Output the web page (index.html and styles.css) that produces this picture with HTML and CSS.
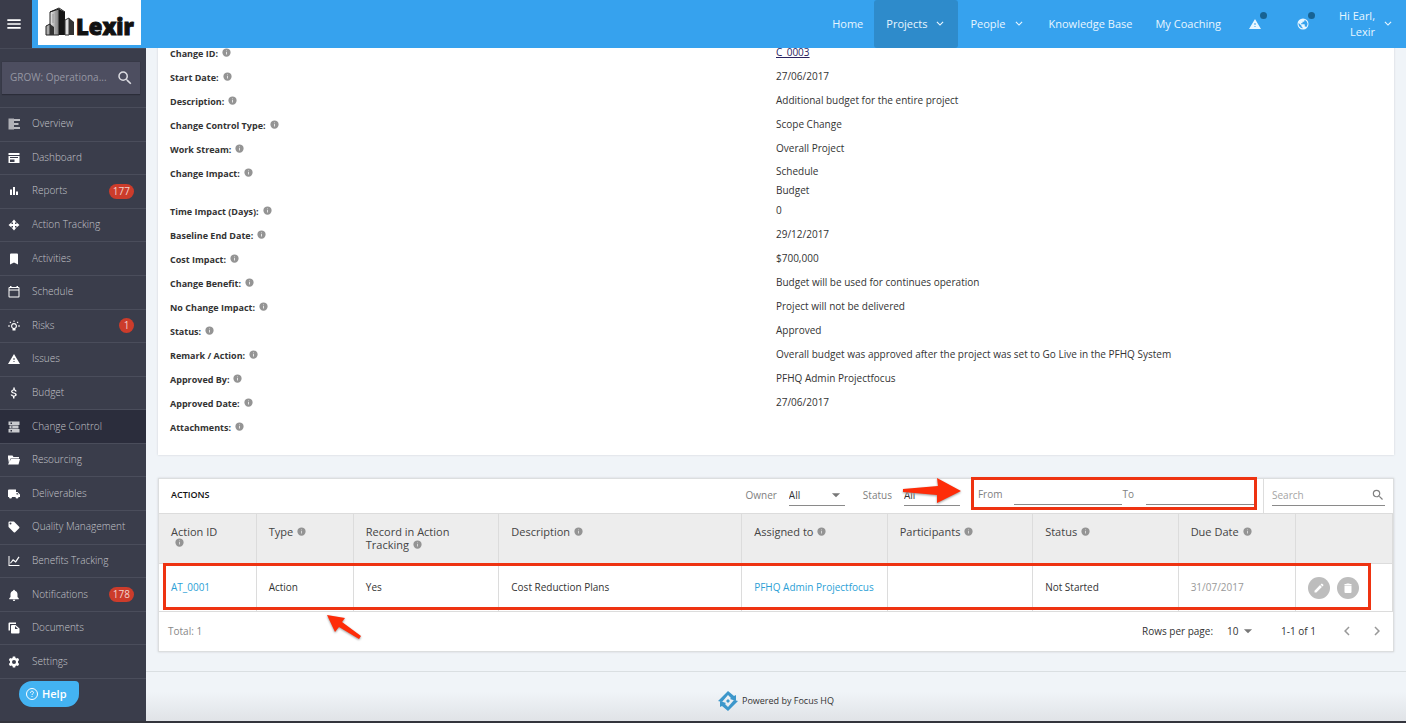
FILE: index.html
```html
<!DOCTYPE html>
<html lang="en">
<head>
<meta charset="utf-8">
<title>Change Control</title>
<link rel="stylesheet" href="styles.css">
</head>
<body>
<svg class="sprite" aria-hidden="true">
  <symbol id="menu" viewBox="0 0 24 24"><path d="M2 5h20v2.4H2zm0 5.8h20v2.4H2zm0 5.8h20V19H2z"/></symbol>
  <symbol id="search" viewBox="0 0 24 24"><path d="M15.5 14h-.79l-.28-.27A6.47 6.47 0 0 0 16 9.5 6.5 6.5 0 1 0 9.5 16c1.61 0 3.09-.59 4.23-1.57l.27.28v.79l5 4.99L20.49 19l-4.99-5zm-6 0C7.01 14 5 11.99 5 9.5S7.01 5 9.5 5 14 7.01 14 9.5 11.99 14 9.5 14z"/></symbol>
  <symbol id="chevron" viewBox="0 0 24 24"><path d="M7.4 7.8 12 12.4l4.6-4.6L18 9.2l-6 6-6-6z"/></symbol>
  <symbol id="left" viewBox="0 0 24 24"><path d="M15.4 7.4 14 6l-6 6 6 6 1.4-1.4-4.6-4.6z"/></symbol>
  <symbol id="right" viewBox="0 0 24 24"><path d="M10 6 8.6 7.4l4.6 4.6-4.6 4.6L10 18l6-6z"/></symbol>
  <symbol id="caret" viewBox="0 0 24 24"><path d="m5 9 7 7 7-7z"/></symbol>
  <symbol id="info" viewBox="0 0 24 24"><path fill-rule="evenodd" d="M12 1a11 11 0 1 0 0 22 11 11 0 0 0 0-22zm1 16.500h-2v-7h2zm0-9h-2v-2h2z"/></symbol>
  <symbol id="overview" viewBox="0 0 24 24"><path opacity=".6" d="M1 1h11v22H1z"/><path opacity=".65" d="M12 2h12v4H12zm0 8h9v4h-9zm0 8h12v4H12z"/></symbol>
  <symbol id="dashboard" viewBox="0 0 24 24"><path d="M1 2h22v4H1zM1 8h22v14H1zm3 2v2h16v-2zm0 5v5h9v-5z" fill-rule="evenodd"/></symbol>
  <symbol id="reports" viewBox="0 0 24 24"><path d="M4 9h4v11H4zm6-5h4v16h-4zm6 9h4v7h-4z"/></symbol>
  <symbol id="tracking" viewBox="0 0 24 24"><path d="m12 1 5 6h-3v3h3V7l6 5-6 5v-3h-3v3h3l-5 6-5-6h3v-3H7v3l-6-5 6-5v3h3V7H7z"/></symbol>
  <symbol id="bookmark" viewBox="0 0 24 24"><path d="M18 1H6a2 2 0 0 0-2 2v20l8-4 8 4V3a2 2 0 0 0-2-2z"/></symbol>
  <symbol id="calendar" viewBox="0 0 24 24"><path fill-rule="evenodd" d="M21 2h-1V0h-3v2H7V0H4v2H3a2 2 0 0 0-2 2v17a2 2 0 0 0 2 2h18a2 2 0 0 0 2-2V4a2 2 0 0 0-2-2zM3 4h18v3H3zm0 5h18v12H3z"/></symbol>
  <symbol id="bulb" viewBox="0 0 24 24"><path fill-rule="evenodd" d="M12 6a6 6 0 0 0-3 11.200V21h6v-3.800A6 6 0 0 0 12 6zm0 2.400a3.700 3.700 0 1 1 0 7.400 3.700 3.700 0 0 1 0-7.400zM11 1h2v3h-2zM0 11h4v2H0zm20 0h4v2h-4zM3 4.400 4.400 3l2.200 2.200-1.400 1.400zm16.600-1.400L21 4.400l-2.200 2.200-1.400-1.400z"/></symbol>
  <symbol id="warning" viewBox="0 0 24 24"><path fill-rule="evenodd" d="M0 22h24L12 2zm13-4h-2v-2h2zm0-4h-2v-4h2z"/></symbol>
  <symbol id="dollar" viewBox="0 0 24 24"><path d="M11.800 10.900c-2.270-.59-3-1.200-3-2.150 0-1.090 1.010-1.850 2.700-1.850 1.780 0 2.440.85 2.500 2.100h3.200c-.07-1.720-1.520-3.300-3.610-3.810V1h-3v4.160C8.650 5.580 6.100 6.840 6.100 8.970c0 2.310 2.410 3.460 5.200 4.130 2.500.6 3 1.480 3 2.210 0 .69-.49 1.790-2.700 1.790-2.060 0-2.870-.92-2.980-2.100H5.300c.12 2.190 2.260 3.420 4.680 3.830V23h3v-4.150c1.950-.37 4.500-1.500 4.500-3.550 0-2.840-3.430-3.810-5.680-4.400z"/></symbol>
  <symbol id="stack" viewBox="0 0 24 24"><path opacity=".75" fill-rule="evenodd" d="M1 1h22v7H1zm4 2v3h3V3zM3 9h18v6H3zm3 2v2h3v-2zM1 16h22v7H1zm4 2v3h3v-3z"/></symbol>
  <symbol id="folder" viewBox="0 0 24 24"><path fill-rule="evenodd" d="M0 3h9l2 3h11v3H5L2 18V8L0 19zm6 7h18l-3 11H0z"/></symbol>
  <symbol id="truck" viewBox="0 0 24 24"><path fill-rule="evenodd" d="M19 8h-3V3H2a2 2 0 0 0-2 2v13h2a3 3 0 0 0 6 0h7a3 3 0 0 0 6 0h3v-5zM17 10h2l2 3h-4z"/></symbol>
  <symbol id="tag" viewBox="0 0 24 24"><path fill-rule="evenodd" d="M22.300 11.500 12.400 1.600A2 2 0 0 0 11 1H3a2 2 0 0 0-2 2v8c0 .55.22 1.050.59 1.420l9.900 9.900a2 2 0 0 0 2.820 0l8-8a2 2 0 0 0 0-2.820zM5 7a2 2 0 1 1 0-4 2 2 0 0 1 0 4z"/></symbol>
  <symbol id="chart" viewBox="0 0 24 24"><path d="M1 2h2v18h20v2H1zM4 16l6-8 5 4 6-9 2 1.400-7.400 11-5.200-4L5.600 17z"/></symbol>
  <symbol id="bell" viewBox="0 0 24 24"><path d="M12 24a2.500 2.500 0 0 0 2.500-2.500h-5A2.500 2.500 0 0 0 12 24zm7-8v-5.500c0-3.500-2-6-5.300-6.800V3a1.700 1.700 0 0 0-3.400 0v.7C7 4.500 5 7 5 10.500V16l-2.500 2.500v2h19v-2z"/></symbol>
  <symbol id="docs" viewBox="0 0 24 24"><path fill-rule="evenodd" d="M16 1H3a2 2 0 0 0-2 2v14h3V4h12zm-1 5H8a2 2 0 0 0-2 2v13c0 1.100.9 2 2 2h13a2 2 0 0 0 2-2v-8zm-1 8V8l6 6z"/></symbol>
  <symbol id="gear" viewBox="0 0 24 24"><path fill-rule="evenodd" d="M9.600 1h4.800l.6 3 2 1.100 3-1 2.300 4-2.300 2.200v3.400l2.300 2.200-2.300 4-3-1-2 1.100-.6 3H9.600l-.6-3-2-1.100-3 1-2.300-4L4 13.700v-3.400L1.700 8.100l2.300-4 3 1L9 4zM12 8a4 4 0 1 0 0 8 4 4 0 0 0 0-8z"/></symbol>
  <symbol id="globe" viewBox="0 0 24 24"><path fill-rule="evenodd" d="M12 1a11 11 0 1 0 0 22 11 11 0 0 0 0-22zm-1 19.900A9 9 0 0 1 3.300 10L9 15.500v1a2 2 0 0 0 2 2zm7.400-2.600A2 2 0 0 0 16.500 17h-1v-3.500a1 1 0 0 0-1-1H8v-2h2a1 1 0 0 0 1-1v-2h2a2 2 0 0 0 2-2v-2a9 9 0 0 1 3.400 14.800z"/></symbol>
  <symbol id="pencil" viewBox="0 0 24 24"><path d="M3 17.250V21h3.750L17.810 9.940l-3.750-3.750zM20.710 7.040a1 1 0 0 0 0-1.410l-2.340-2.340a1 1 0 0 0-1.410 0l-1.830 1.830 3.750 3.750z"/></symbol>
  <symbol id="trash" viewBox="0 0 24 24"><path d="M5 20a2 2 0 0 0 2 2h10a2 2 0 0 0 2-2V7H5zM19 4h-3.500l-1-1h-5l-1 1H5v2h14z"/></symbol>
  <symbol id="help" viewBox="0 0 24 24"><g fill="none" stroke="currentColor" stroke-width="2"><circle cx="12" cy="12" r="11"/><path d="M9 9.500c0-4 6-4 6-.3 0 2.300-3 2.300-3 4.800"/></g><path d="M11 15.800h2v2.200h-2z"/></symbol>
</svg>

<header class="topbar">
  <button class="menu-btn" aria-label="Menu"><svg class="i16"><use href="#menu"/></svg></button>
  <a class="logo" href="#" aria-label="Lexir">
    <svg class="logo-art" viewBox="0 0 103 45">
      <defs>
        <linearGradient id="steel"><stop offset="0" stop-color="#eee"/><stop offset="1" stop-color="#777"/></linearGradient>
      </defs>
      <path d="m12 12 9-3v26h-9z" fill="url(#steel)" stroke="#222"/>
      <path d="m21 9 6 3v23h-6z" fill="#151515"/>
      <path d="m12 12 9-4 6 4" fill="none" stroke="#222"/>
      <path d="m8 26 4-2v11H8z" fill="#aaa" stroke="#222"/><path d="m12 24 4 3v8h-4z" fill="#333"/>
      <path d="m27 20 4-2v17h-4z" fill="#ddd" stroke="#333"/><path d="m31 18 5 4v13h-5z" fill="#333"/>
      <path d="M15 14v9M18 12v22" stroke="#999"/>
      <text class="logo-text" x="38" y="35">Lexir</text>
    </svg>
  </a>
  <nav class="topnav">
    <a href="#">Home</a>
    <a href="#" class="active">Projects <svg class="i14"><use href="#chevron"/></svg></a>
    <a href="#">People <svg class="i14"><use href="#chevron"/></svg></a>
    <a href="#">Knowledge Base</a>
    <a href="#">My Coaching</a>
    <button class="top-icon" aria-label="Alerts"><svg class="i12"><use href="#warning"/></svg><i class="dot"></i></button>
    <button class="top-icon" aria-label="Language"><svg class="i12"><use href="#globe"/></svg><i class="dot"></i></button>
    <button class="user"><span>Hi Earl,<br>Lexir</span><svg class="i14"><use href="#chevron"/></svg></button>
  </nav>
</header>

<div class="shell">
  <aside class="sidebar">
    <div class="project-search">
      <input type="text" aria-label="Project" placeholder="GROW: Operationa...">
      <svg class="i18"><use href="#search"/></svg>
    </div>
    <nav class="sidenav">
      <a href="#"><svg class="i12"><use href="#overview"/></svg><span>Overview</span></a>
      <a href="#"><svg class="i12"><use href="#dashboard"/></svg><span>Dashboard</span></a>
      <a href="#"><svg class="i12"><use href="#reports"/></svg><span>Reports</span><b class="badge">177</b></a>
      <a href="#"><svg class="i12"><use href="#tracking"/></svg><span>Action Tracking</span></a>
      <a href="#"><svg class="i12"><use href="#bookmark"/></svg><span>Activities</span></a>
      <a href="#"><svg class="i12"><use href="#calendar"/></svg><span>Schedule</span></a>
      <a href="#"><svg class="i12"><use href="#bulb"/></svg><span>Risks</span><b class="badge">1</b></a>
      <a href="#"><svg class="i12"><use href="#warning"/></svg><span>Issues</span></a>
      <a href="#"><svg class="i12"><use href="#dollar"/></svg><span>Budget</span></a>
      <a href="#" class="active"><svg class="i12"><use href="#stack"/></svg><span>Change Control</span></a>
      <a href="#"><svg class="i12"><use href="#folder"/></svg><span>Resourcing</span></a>
      <a href="#"><svg class="i12"><use href="#truck"/></svg><span>Deliverables</span></a>
      <a href="#"><svg class="i12"><use href="#tag"/></svg><span>Quality Management</span></a>
      <a href="#"><svg class="i12"><use href="#chart"/></svg><span>Benefits Tracking</span></a>
      <a href="#"><svg class="i12"><use href="#bell"/></svg><span>Notifications</span><b class="badge">178</b></a>
      <a href="#"><svg class="i12"><use href="#docs"/></svg><span>Documents</span></a>
      <a href="#"><svg class="i12"><use href="#gear"/></svg><span>Settings</span></a>
    </nav>
    <button class="help"><svg class="i12"><use href="#help"/></svg>Help</button>
  </aside>

  <main class="main">
    <dl class="card details">
      <div><dt>Change ID:<svg class="info"><use href="#info"/></svg></dt><dd><a href="#">C_0003</a></dd></div>
      <div><dt>Start Date:<svg class="info"><use href="#info"/></svg></dt><dd>27/06/2017</dd></div>
      <div><dt>Description:<svg class="info"><use href="#info"/></svg></dt><dd>Additional budget for the entire project</dd></div>
      <div><dt>Change Control Type:<svg class="info"><use href="#info"/></svg></dt><dd>Scope Change</dd></div>
      <div><dt>Work Stream:<svg class="info"><use href="#info"/></svg></dt><dd>Overall Project</dd></div>
      <div><dt>Change Impact:<svg class="info"><use href="#info"/></svg></dt><dd class="lines">Schedule<br>Budget</dd></div>
      <div><dt>Time Impact (Days):<svg class="info"><use href="#info"/></svg></dt><dd>0</dd></div>
      <div><dt>Baseline End Date:<svg class="info"><use href="#info"/></svg></dt><dd>29/12/2017</dd></div>
      <div><dt>Cost Impact:<svg class="info"><use href="#info"/></svg></dt><dd>$700,000</dd></div>
      <div><dt>Change Benefit:<svg class="info"><use href="#info"/></svg></dt><dd>Budget will be used for continues operation</dd></div>
      <div><dt>No Change Impact:<svg class="info"><use href="#info"/></svg></dt><dd>Project will not be delivered</dd></div>
      <div><dt>Status:<svg class="info"><use href="#info"/></svg></dt><dd>Approved</dd></div>
      <div><dt>Remark / Action:<svg class="info"><use href="#info"/></svg></dt><dd>Overall budget was approved after the project was set to Go Live in the PFHQ System</dd></div>
      <div><dt>Approved By:<svg class="info"><use href="#info"/></svg></dt><dd>PFHQ Admin Projectfocus</dd></div>
      <div><dt>Approved Date:<svg class="info"><use href="#info"/></svg></dt><dd>27/06/2017</dd></div>
      <div><dt>Attachments:<svg class="info"><use href="#info"/></svg></dt><dd></dd></div>
    </dl>

    <section class="card actions">
      <div class="toolbar">
        <h2>ACTIONS</h2>
        <label class="filter">Owner <span class="pick"><select><option>All</option></select><svg class="i14"><use href="#caret"/></svg></span></label>
        <label class="filter">Status <span class="pick"><select><option>All</option></select></span>
          <svg class="arrow-right" viewBox="0 0 60 30"><path d="M1 13 36 10 35 2 59 15 35 27V19L1 16z"/></svg>
        </label>
        <div class="dates">
          <label for="from">From</label><input id="from" type="text">
          <label for="to">To</label><input id="to" type="text">
        </div>
        <div class="search"><div class="search-box"><input type="text" aria-label="Search" placeholder="Search"><svg class="i14"><use href="#search"/></svg></div></div>
      </div>
      <div class="table-wrap">
        <table>
          <colgroup><col class="id"><col class="type"><col class="mid"><col class="desc"><col class="mid"><col class="mid"><col class="mid"><col class="date"><col class="tools"></colgroup>
          <thead><tr>
            <th>Action ID <svg class="info under"><use href="#info"/></svg></th>
            <th>Type<svg class="info"><use href="#info"/></svg></th>
            <th>Record in Action Tracking<svg class="info"><use href="#info"/></svg></th>
            <th>Description<svg class="info"><use href="#info"/></svg></th>
            <th>Assigned to<svg class="info"><use href="#info"/></svg></th>
            <th>Participants<svg class="info"><use href="#info"/></svg></th>
            <th>Status<svg class="info"><use href="#info"/></svg></th>
            <th>Due Date<svg class="info"><use href="#info"/></svg></th>
            <th></th>
          </tr></thead>
          <tbody><tr>
            <td><a href="#">AT_0001</a></td><td>Action</td><td>Yes</td><td>Cost Reduction Plans</td>
            <td><a href="#">PFHQ Admin Projectfocus</a></td><td></td><td>Not Started</td><td class="due">31/07/2017</td>
            <td><div class="row-btns"><button aria-label="Edit"><svg class="i12"><use href="#pencil"/></svg></button><button aria-label="Delete"><svg class="i12"><use href="#trash"/></svg></button></div></td>
          </tr></tbody>
        </table>
        <div class="row-mark"></div>
        <svg class="arrow-up" viewBox="0 0 36 26"><path d="m1 1 18 3-3 4 19 14-2 3-20-12-4 5z"/></svg>
      </div>
      <div class="pager">
        <span class="total">Total: 1</span>
        <label for="rows">Rows per page:</label>
        <span class="rows"><select id="rows"><option>10</option></select><svg class="i14"><use href="#caret"/></svg></span>
        <span class="range">1-1 of 1</span>
        <button aria-label="Previous page"><svg class="i18"><use href="#left"/></svg></button>
        <button aria-label="Next page"><svg class="i18"><use href="#right"/></svg></button>
      </div>
    </section>

    <footer class="footer">
      <svg class="focus-logo" viewBox="0 0 20 20"><g fill="#3d97cb"><path d="m10 0 6 5 2-1v6l-6-2 1-1-3-3-6 7-4-1z"/><path d="m10 20-6-5-2 1v-6l6 2-1 1 3 3 6-7 4 1z"/><path d="m10 8 2 2-2 2-2-2z"/></g></svg>
      <span>Powered by Focus HQ</span>
    </footer>
  </main>
</div>
</body>
</html>
```
FILE: styles.css
```css
* { box-sizing: border-box; }
body {
  margin: 0;
  min-height: 100vh;
  display: flex;
  flex-direction: column;
  font: 10px/20px "Open Sans", sans-serif;
  color: #333;
  background: #f0f4f8;
  border-bottom: 2px solid #33343c;
}
a { color: #2c9fd6; text-decoration: none; }
button, input, select { font: inherit; color: inherit; border: 0; background: none; padding: 0; margin: 0; }
select { appearance: none; }
svg { fill: currentColor; flex: none; }
.sprite { position: absolute; width: 0; height: 0; }
.i12 { width: 12px; height: 12px; }
.i14 { width: 14px; height: 14px; }
.i16 { width: 16px; height: 16px; }
.i18 { width: 18px; height: 18px; }

.topbar { position: relative; z-index: 2; display: flex; height: 48px; background: #36a2ee; color: #e8f6ff; font-size: 11px; line-height: 16px; }
.menu-btn { width: 32px; background: #3a3c4a; color: #fff; display: grid; place-items: center; padding-right: 4px; }
.logo { margin-left: 6px; width: 103px; height: 45px; background: #fff; }
.logo-art { display: block; width: 103px; height: 45px; }
.logo-text { font: 800 22px "Open Sans", sans-serif; fill: #111; stroke: #111; stroke-width: 1; }
.topnav { display: flex; margin-left: auto; padding-right: 11px; }
.topnav a { display: flex; align-items: center; gap: 6px; padding: 0 11px 0 12px; color: inherit; }
.topnav a.active { background: #2e8bcb; border-radius: 3px; }
.top-icon { position: relative; width: 35px; display: grid; place-items: center; padding-left: 11px; }
.top-icon + .top-icon { width: 48px; padding-left: 24px; }
.dot { position: absolute; right: 0; top: 12px; width: 7px; height: 7px; border-radius: 50%; background: #176293; }
.user { display: flex; align-items: center; gap: 6px; text-align: right; padding-left: 24px; }

.shell { flex: 1; display: flex; }
.sidebar { width: 146px; flex: none; background: #3a3d4b; color: #c3c4ca; border-top: 1px solid #474a58; }
.project-search { display: flex; align-items: center; margin: 13px 6px 12px 2px; height: 33px; padding: 0 6px 0 8px; background: #4d4e60; border-bottom: 1px solid #2b2d39; box-shadow: 0 0 1px #2b2d39; color: #dcdce2; }
.project-search input { flex: 1; min-width: 0; outline: 0; padding-bottom: 3px; }
.project-search input::placeholder { color: #9596a3; opacity: 1; }
.sidenav { display: grid; grid-template-rows: repeat(17, 1fr); height: 572px; border-bottom: 1px solid #4a4d5b; }
.sidenav a { display: flex; align-items: center; gap: 12px; padding: 0 12px 0 8px; border-top: 1px solid #4a4d5b; color: inherit; font-weight: 300; }
.sidenav span { padding-bottom: 2px; }
.sidenav svg { color: #fff; }
.sidenav a.active { background: #2b2d3c; }
.badge { margin-left: auto; min-width: 15px; padding: 0 4px; border-radius: 8px; background: #cc3c2b; color: #f3d3cd; font-weight: 400; line-height: 15px; text-align: center; }
.help { display: flex; align-items: center; gap: 4px; margin: 2px 0 0 19px; padding: 0 12px 0 7px; height: 26px; border-radius: 13px 4px 13px 13px; background: #43b3f2; color: #fff; font-size: 11px; font-weight: 600; }

.main { flex: 1; min-width: 0; display: flex; flex-direction: column; }
.card { margin: 0 12px; background: #fff; box-shadow: 0 0 2px #ccd1d6; }
.details { margin-top: -6px; padding: 0 12px 15px; }
.details div { display: grid; grid-template-columns: 1fr 1fr; min-height: 24px; }
.details dt { font-weight: 700; font-size: 9px; padding-top: 2px; line-height: 20px; }
.details dd { margin: 0; }
.details dd.lines { line-height: 19px; }
.details dd a { color: #2b2360; text-decoration: underline; }
.info { width: 9px; height: 9px; margin-left: 4px; color: #949494; vertical-align: 0; }

.actions { margin-top: 23px; border: 1px solid #dcdedf; }
.toolbar { display: flex; height: 34px; align-items: stretch; color: #808080; }
.toolbar h2 { margin: 0 auto 0 0; padding-left: 12px; font-size: 9px; font-weight: 600; color: #111; line-height: 32px; }
.filter { position: relative; display: flex; align-items: center; gap: 12px; margin-right: 18px; padding-bottom: 2px; }
.pick { display: flex; align-items: center; width: 56px; height: 22px; border-bottom: 1px solid #8a8a8a; color: #333; }
.pick select { flex: 1; min-width: 0; }
.pick svg { color: #777; margin-right: 2px; }
.filter + .dates { margin-left: -7px; }
.dates { display: flex; align-items: center; border: 3px solid #ee3311; margin: -2px 6px 3px 0; padding-left: 4px; }
.dates input { width: 108px; height: 22px; border-bottom: 1px solid #8a8a8a; margin-left: 12px; }
.search { display: flex; align-items: center; border-left: 1px solid #ddd; padding: 0 8px 2px; }
.search-box { display: flex; align-items: center; width: 113px; height: 22px; border-bottom: 1px solid #8a8a8a; }
.search-box input { flex: 1; min-width: 0; }
.search-box input::placeholder { color: #a5a5a5; opacity: 1; }
.arrow-right { position: absolute; left: 39px; top: -3px; width: 60px; height: 30px; fill: #fe2c08; filter: drop-shadow(0 1px 1px #999); }

.table-wrap { position: relative; }
table { width: 100%; table-layout: fixed; border-collapse: collapse; }
.id, .type, .tools { width: 7.88%; }
.mid { width: 11.8%; }
.desc { width: 19.7%; }
.date { width: 9.5%; }
th, td { text-align: left; padding: 0 12px; border: 1px solid #dcdcdc; border-width: 1px 1px 1px 0; }
th { height: 50px; padding-top: 11px; vertical-align: top; background: #ededed; font-size: 11px; line-height: 13px; font-weight: 500; color: #444; }
td { height: 48px; padding-bottom: 2px; }
.due { color: #999; }
.under { display: block; }
.row-btns { display: flex; gap: 7px; padding-top: 2px; }
.row-btns button { width: 22px; height: 22px; border-radius: 50%; background: #bdbdbd; color: #fff; display: grid; place-items: center; }
.row-mark { position: absolute; left: 4px; right: 22px; top: 50px; bottom: 2px; border: 3px solid #ee3311; }
.arrow-up { position: absolute; left: 167px; top: 101px; width: 36px; height: 26px; fill: #fe2c08; filter: drop-shadow(0 1px 1px #999); }

.pager { display: flex; align-items: center; height: 39px; padding: 0 7px 2px 9px; }
.total { margin-right: auto; color: #888; }
.rows { display: flex; align-items: center; gap: 2px; margin: 0 26px 0 14px; }
.rows svg { color: #777; }
.range { margin-right: 10px; }
.pager button { display: grid; color: #999; margin-left: 12px; }

.footer { flex: 1; display: flex; align-items: center; justify-content: center; gap: 4px; margin-top: 19px; padding-top: 9px; border-top: 1px solid #dadfe2; font-size: 9px; color: #333; background: linear-gradient(#f0f4f8 40%, #e0e3e7); }
.focus-logo { width: 20px; height: 20px; }
```
